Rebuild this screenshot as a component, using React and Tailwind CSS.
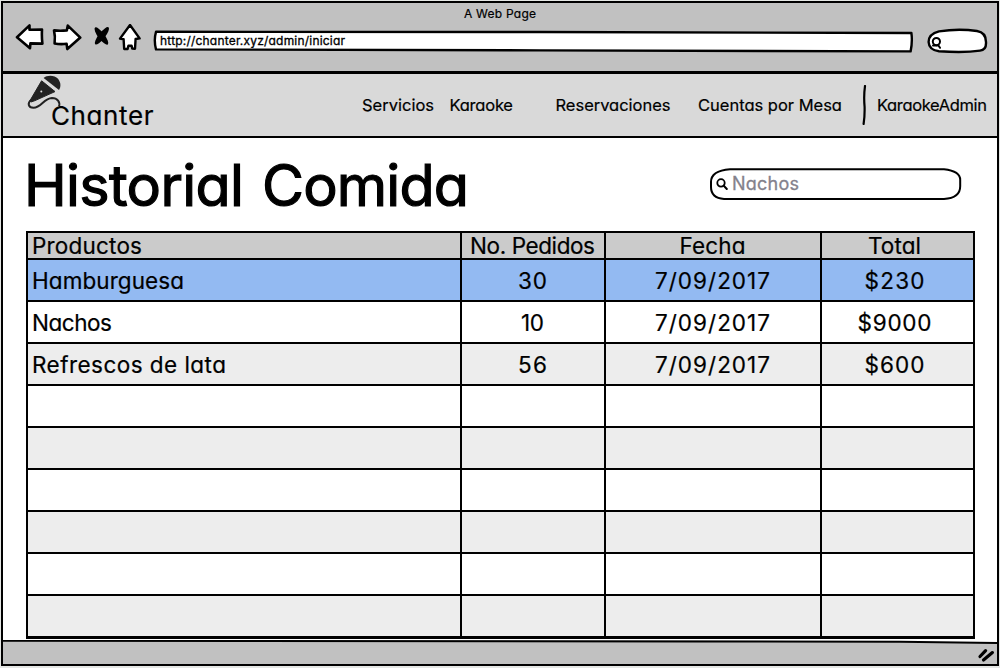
import React, { useLayoutEffect, useRef, useState } from "react";

/* Text tracked so that it fills the given width on one line. */
function FitText({ width, className = "", children }) {
  const ref = useRef(null);
  const [spacing, setSpacing] = useState(0);
  useLayoutEffect(() => {
    const natural = ref.current.getBoundingClientRect().width;
    setSpacing((width - natural) / (children.length - 1));
  }, []);
  return (
    <span
      ref={ref}
      className={`inline-block whitespace-pre leading-none ${className}`}
      style={{ letterSpacing: spacing, marginRight: -spacing }}
    >
      {children}
    </span>
  );
}

const stroke = {
  fill: "#fff",
  stroke: "#000",
  strokeWidth: 2.6,
  strokeLinejoin: "round",
  strokeLinecap: "round",
};

function BackIcon() {
  return (
    <svg className="h-7 w-[30px]" viewBox="15 24 30 28">
      <path {...stroke} d="M17 37.2L29.5 25.4V29.8L42 29.6Q41.6 37 42.4 43.6L30.4 43.4L30 48.2Z" />
    </svg>
  );
}

function ForwardIcon() {
  return (
    <svg className="h-7 w-[31px]" viewBox="52 24 31 28">
      <path {...stroke} d="M54 30.4Q60 31.2 66.8 30.4L67.8 25.6L80.3 37.6L67.3 49L66.6 43.8Q60 44.6 54.6 43.4Q55.4 36 54 30.4Z" />
    </svg>
  );
}

function StopIcon() {
  return (
    <svg className="h-7 w-[20px]" viewBox="92 24 20 28">
      <ellipse cx="101.4" cy="36" rx="10.6" ry="3.2" transform="rotate(53 101.4 36)" />
      <ellipse cx="101.9" cy="35.8" rx="10.8" ry="3.2" transform="rotate(-52 101.9 35.8)" />
    </svg>
  );
}

function HomeIcon() {
  return (
    <svg className="h-7 w-6" viewBox="118 24 24 28">
      <path {...stroke} strokeWidth="2.4" d="M130 25L139.6 38.4L135.6 39L135 48.8L132.2 48.6L131.6 45.8H128.4L127.6 49H124.2L123.6 39.2L120 38.6Z" />
    </svg>
  );
}

function Lens({ className }) {
  return (
    <svg className={className} viewBox="0 0 12 12" fill="none" stroke="#000" strokeLinecap="round">
      <circle cx="5" cy="4.9" r="3.7" strokeWidth="1.8" />
      <path d="M7.8 7.8L10.8 11" strokeWidth="2" />
    </svg>
  );
}

function ToolbarLens({ className }) {
  return (
    <svg className={className} viewBox="0 0 12 12" fill="none" stroke="#000" strokeLinecap="round">
      <circle cx="6.4" cy="4.6" r="3.6" strokeWidth="2" />
      <path d="M3 8.4L8.4 8.4L10 10.8" strokeWidth="2" />
    </svg>
  );
}

function Microphone() {
  return (
    <svg className="h-[38px] w-9 shrink-0" viewBox="26 74 36 38">
      <path fill="#222" d="M43.6 78C47 74.9 54.6 75 58 78.8C61 82.6 61 86.8 59 90Z" />
      <path fill="#222" stroke="#222" strokeWidth="1" strokeLinejoin="round" d="M41.6 80.8L55 91.6L35 100.6L31 102L30 100.6Z" />
      <circle cx="41.3" cy="91.6" r="1" fill="#ddd" />
      <path fill="none" stroke="#222" strokeWidth="2" d="M31 100C27.4 103 28 107.8 33.5 107.8C41.5 107.8 43.5 98.4 52 98C57.5 98 60.4 102 59 106.4" />
    </svg>
  );
}

function BrowserChrome() {
  return (
    <header className="h-[71px] border-b-3 border-black bg-[#c1c1c1]">
      <div className="flex h-[21px] items-center justify-center">
        <FitText width={72} className="text-xs [-webkit-text-stroke:0.2px_black]">A Web Page</FitText>
      </div>
      <div className="flex items-start pl-3">
        <BackIcon />
        <div className="w-[7px]" />
        <ForwardIcon />
        <div className="w-[9px]" />
        <StopIcon />
        <div className="w-[6px]" />
        <HomeIcon />
        <div className="relative ml-[10px] mt-[6px] flex h-[23px] w-[762px] items-center pb-[2px] pl-2">
          <svg className="absolute inset-0 h-full w-full" viewBox="152 30 762 23">
            <path {...stroke} strokeWidth="2.4" d="M156 31.8L540 32L911.4 33Q912.6 42 910.6 51.4L540 50.4L156 49.4Q153.6 40 156 31.8Z" />
          </svg>
          <FitText width={185} className="relative pt-px text-xs [-webkit-text-stroke:0.3px_black]">http://chanter.xyz/admin/iniciar</FitText>
        </div>
        <div className="relative ml-[12px] mt-[4px] h-[28px] w-[64px] pl-[4px] pt-[9px]">
          <svg className="absolute inset-0 h-full w-full" viewBox="926 28 64 28">
            <path {...stroke} strokeWidth="2.4" d="M939 31.4Q958 28.4 977 31Q986 32.5 986 42Q986.5 50 980 50.6Q964 53 939 51.2Q929 50 928.6 42Q928.6 34 939 31.4Z" />
          </svg>
          <ToolbarLens className="relative size-3" />
        </div>
      </div>
    </header>
  );
}

function NavBar() {
  return (
    <nav className="flex h-[64px] border-b-2 border-black bg-[#d9d9d9] text-[16.5px] [-webkit-text-stroke:0.2px_black]">
      <div className="flex w-[359px] items-start pl-[23px]">
        <Microphone />
        <div className="-ml-[11px] mt-[29px] text-[26px] leading-none">
          <FitText width={102.5}>Chanter</FitText>
        </div>
      </div>
      <div className="flex h-[62px] items-center">
        <FitText width={72}>Servicios</FitText>
        <div className="w-[15.5px]" />
        <FitText width={63.5}>Karaoke</FitText>
        <div className="w-[42.5px]" />
        <FitText width={115}>Reservaciones</FitText>
        <div className="w-[27.5px]" />
        <FitText width={144}>Cuentas por Mesa</FitText>
        <svg className="ml-[20px] h-10 w-[5px]" viewBox="863 85 5 40" fill="none" stroke="#000" strokeLinecap="round">
          <path d="M866 86Q864.6 96 865.6 107Q865.8 117 864.6 124" strokeWidth="2.2" />
        </svg>
        <div className="w-[10px]" />
        <FitText width={110}>KaraokeAdmin</FitText>
      </div>
    </nav>
  );
}

function SearchBox() {
  return (
    <div className="relative flex h-[34px] w-[254px] items-center pl-[8px]">
      <svg className="absolute inset-0 h-full w-full" viewBox="708 168 254 34">
        <path {...stroke} strokeWidth="2" d="M730 169.2H944Q960.4 171 960.2 180V186Q960.4 198 944 199H724Q711 198 711 187V182Q711 170.6 730 169.2Z" />
      </svg>
      <Lens className="relative -mt-px size-3" />
      <div className="relative -mt-px ml-[4px] text-[18px] leading-none text-[#84828c] [-webkit-text-stroke:0.3px_#84828c]">
        <FitText width={67}>Nachos</FitText>
      </div>
    </div>
  );
}

const columns = [
  ["Productos", 110],
  ["No. Pedidos", 125],
  ["Fecha", 66],
  ["Total", 53],
];

const rows = [
  [["Hamburguesa", 152], ["30", 29], ["7/09/2017", 115], ["$230", 60]],
  [["Nachos", 80], ["10", 23], ["7/09/2017", 115], ["$9000", 74]],
  [["Refrescos de lata", 194], ["56", 29], ["7/09/2017", 115], ["$600", 60]],
  [], [], [], [], [], [],
];

function Cells({ cells }) {
  return [0, 1, 2, 3].map((i) => (
    <div
      key={i}
      className={`flex items-center border-black pt-[2px] ${i < 3 ? "border-r-2 pr-px" : "pr-[6px]"} ${
        i === 0 ? "pl-[4px]" : "justify-center"
      }`}
    >
      {cells[i] && <FitText width={cells[i][1]}>{cells[i][0]}</FitText>}
    </div>
  ));
}

function HistoryTable() {
  return (
    <section className="h-[408px] w-[949px] overflow-hidden border-2 border-b-3 border-black text-[22.5px] [-webkit-text-stroke:0.2px_black]">
      <div className="grid h-[27px] grid-cols-[434px_144px_216px_1fr] border-b-2 border-black bg-[#cbcbcb]">
        <Cells cells={columns} />
      </div>
      {rows.map((cells, i) => (
        <div
          key={i}
          className={`grid h-[42px] grid-cols-[434px_144px_216px_1fr] border-b-2 border-black ${
            i === 0 ? "bg-[#93baf2]" : i % 2 ? "bg-white" : "bg-[#ededed]"
          }`}
        >
          <Cells cells={cells} />
        </div>
      ))}
    </section>
  );
}

export default function App() {
  return (
    <div className="h-[668px] w-[1000px] overflow-hidden bg-[#e4e6e4] px-px pt-px pb-[2px] font-['Inter','Liberation_Sans',sans-serif] text-black [font-feature-settings:'cv11','kern']">
      <div className="flex h-[665px] flex-col border-2 border-black bg-white">
        <BrowserChrome />
        <NavBar />
        <main className="h-[502px] pl-[23px]">
          <div className="flex h-[93px] items-center">
            <h1 className="flex w-[682px] gap-[18px] pt-[2px] text-[57.5px] leading-none [-webkit-text-stroke:1.2px_black]">
              <FitText width={220} className="-ml-[2px]">Historial</FitText>
              <FitText width={207}>Comida</FitText>
            </h1>
            <SearchBox />
          </div>
          <HistoryTable />
        </main>
        <footer className="flex flex-1 items-end justify-end bg-[#c1c1c1]">
          <svg className="h-full w-full" viewBox="3 640 994 24" preserveAspectRatio="none">
            <path fill="#fff" d="M700 640H997V643Z" />
            <path fill="none" stroke="#000" strokeWidth="2" d="M3 640.8L700 641.4L900 641.8L997 643" />
            <g stroke="#000" strokeWidth="3.2" strokeLinecap="round">
              <path d="M980 656.5L985.6 650.6" />
              <path d="M983.5 660L992.4 652.6" />
            </g>
          </svg>
        </footer>
      </div>
    </div>
  );
}
